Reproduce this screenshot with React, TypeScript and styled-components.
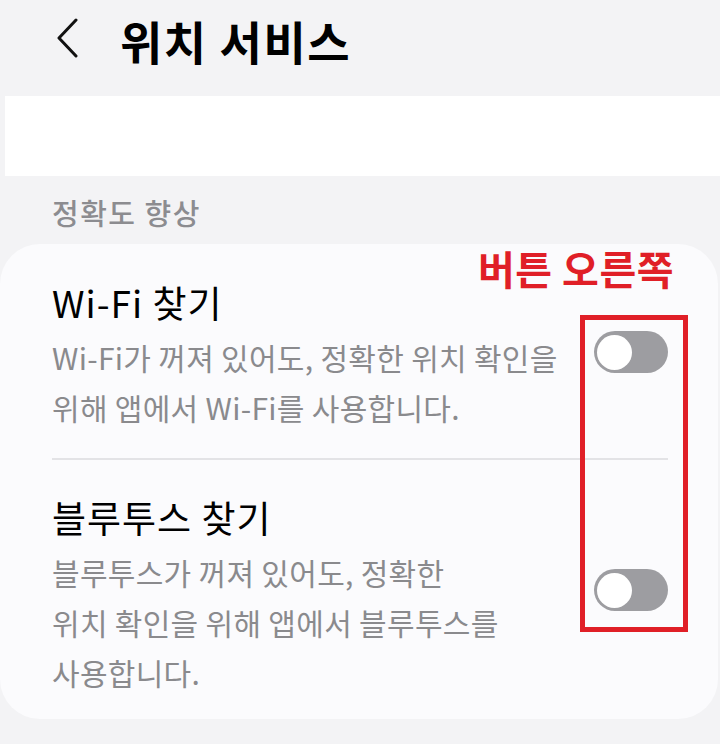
import React from 'react';
import styled, { createGlobalStyle } from 'styled-components';

const GlobalStyle = createGlobalStyle`
  html, body {
    margin: 0;
    padding: 0;
    background: #f3f3f5;
  }
  body {
    font-family: "Noto Sans CJK KR", "Noto Sans", sans-serif;
    color: #000;
  }
`;

const Page = styled.div`
  width: 720px;
  height: 744px;
  overflow: hidden;
  background: #f3f3f5;
`;

const Header = styled.header`
  display: flex;
  align-items: center;
  gap: 40px;
  height: 96px;
  padding: 0 0 16px 54px;
  box-sizing: border-box;
`;

const BackButton = styled.button`
  display: flex;
  align-items: center;
  justify-content: center;
  width: 26px;
  height: 44px;
  padding: 0;
  border: none;
  background: transparent;
  cursor: pointer;
  margin-top: -4px;
`;

const Title = styled.h1`
  margin: 0;
  font-size: 46px;
  font-weight: 700;
  letter-spacing: 1.5px;
  line-height: 56px;
`;

const BlankBar = styled.div`
  height: 80px;
  margin-left: 5px;
  background: #ffffff;
`;

const SectionLabel = styled.div`
  padding: 16px 0 0 52px;
  height: 52px;
  box-sizing: border-box;
  font-size: 29px;
  font-weight: 500;
  line-height: 40px;
  letter-spacing: 1.5px;
  color: #8c8c90;
`;

const Card = styled.section`
  position: relative;
  margin: 16px 2px 0 0;
  height: 475px;
  box-sizing: border-box;
  background: #fbfbfd;
  border-radius: 40px;
  padding: 0 50px 0 52px;
`;

const Row = styled.div<{ top: number; bottom: number }>`
  display: flex;
  align-items: flex-start;
  justify-content: space-between;
  gap: 20px;
  padding: ${p => p.top}px 0 ${p => p.bottom}px;
`;

const RowText = styled.div`
  display: flex;
  flex-direction: column;
  gap: 8px;
`;

const RowTitle = styled.div`
  font-size: 37px;
  line-height: 44px;
  font-weight: 400;
  letter-spacing: 1px;
  color: #000;
`;

const RowDesc = styled.div`
  font-size: 30px;
  line-height: 50px;
  letter-spacing: 0.3px;
  color: #8a8a8d;
  white-space: nowrap;
`;

const Divider = styled.hr`
  margin: 0;
  border: none;
  border-top: 2px solid #e3e3e6;
`;

const Toggle = styled.div<{ offset: number }>`
  flex: none;
  width: 74px;
  height: 42px;
  border-radius: 21px;
  background: #9d9da1;
  margin-top: ${p => p.offset}px;
  display: flex;
  align-items: center;
  padding-left: 3px;
  box-sizing: border-box;
`;

const Thumb = styled.span`
  width: 35px;
  height: 35px;
  border-radius: 50%;
  background: #ffffff;
`;

const Annotation = styled.div`
  position: absolute;
  top: 0;
  right: 44px;
  font-size: 40px;
  font-weight: 700;
  line-height: 48px;
  letter-spacing: 0.5px;
  color: #e01f27;
`;

const HighlightBox = styled.div`
  position: absolute;
  top: 71px;
  right: 30px;
  width: 108px;
  height: 317px;
  box-sizing: border-box;
  border: 5px solid #e01f27;
`;

const ChevronLeft = () => (
  <svg width="22" height="40" viewBox="0 0 22 40" fill="none">
    <path d="M20 2 L3 20 L20 38" stroke="#111" strokeWidth="3" strokeLinecap="round" strokeLinejoin="round" />
  </svg>
);

const App: React.FC = () => {
  return (
    <>
      <GlobalStyle />
      <Page>
        <Header>
          <BackButton aria-label="뒤로">
            <ChevronLeft />
          </BackButton>
          <Title>위치 서비스</Title>
        </Header>
        <BlankBar />
        <SectionLabel>정확도 향상</SectionLabel>
        <Card>
          <Row top={36} bottom={26}>
            <RowText>
              <RowTitle>Wi-Fi 찾기</RowTitle>
              <RowDesc>
                Wi-Fi가 꺼져 있어도, 정확한 위치 확인을
                <br />
                위해 앱에서 Wi-Fi를 사용합니다.
              </RowDesc>
            </RowText>
            <Toggle offset={51}>
              <Thumb />
            </Toggle>
          </Row>
          <Divider />
          <Row top={35} bottom={19}>
            <RowText>
              <RowTitle>블루투스 찾기</RowTitle>
              <RowDesc>
                블루투스가 꺼져 있어도, 정확한
                <br />
                위치 확인을 위해 앱에서 블루투스를
                <br />
                사용합니다.
              </RowDesc>
            </RowText>
            <Toggle offset={74}>
              <Thumb />
            </Toggle>
          </Row>
          <Annotation>버튼 오른쪽</Annotation>
          <HighlightBox />
        </Card>
      </Page>
    </>
  );
};

export default App;
